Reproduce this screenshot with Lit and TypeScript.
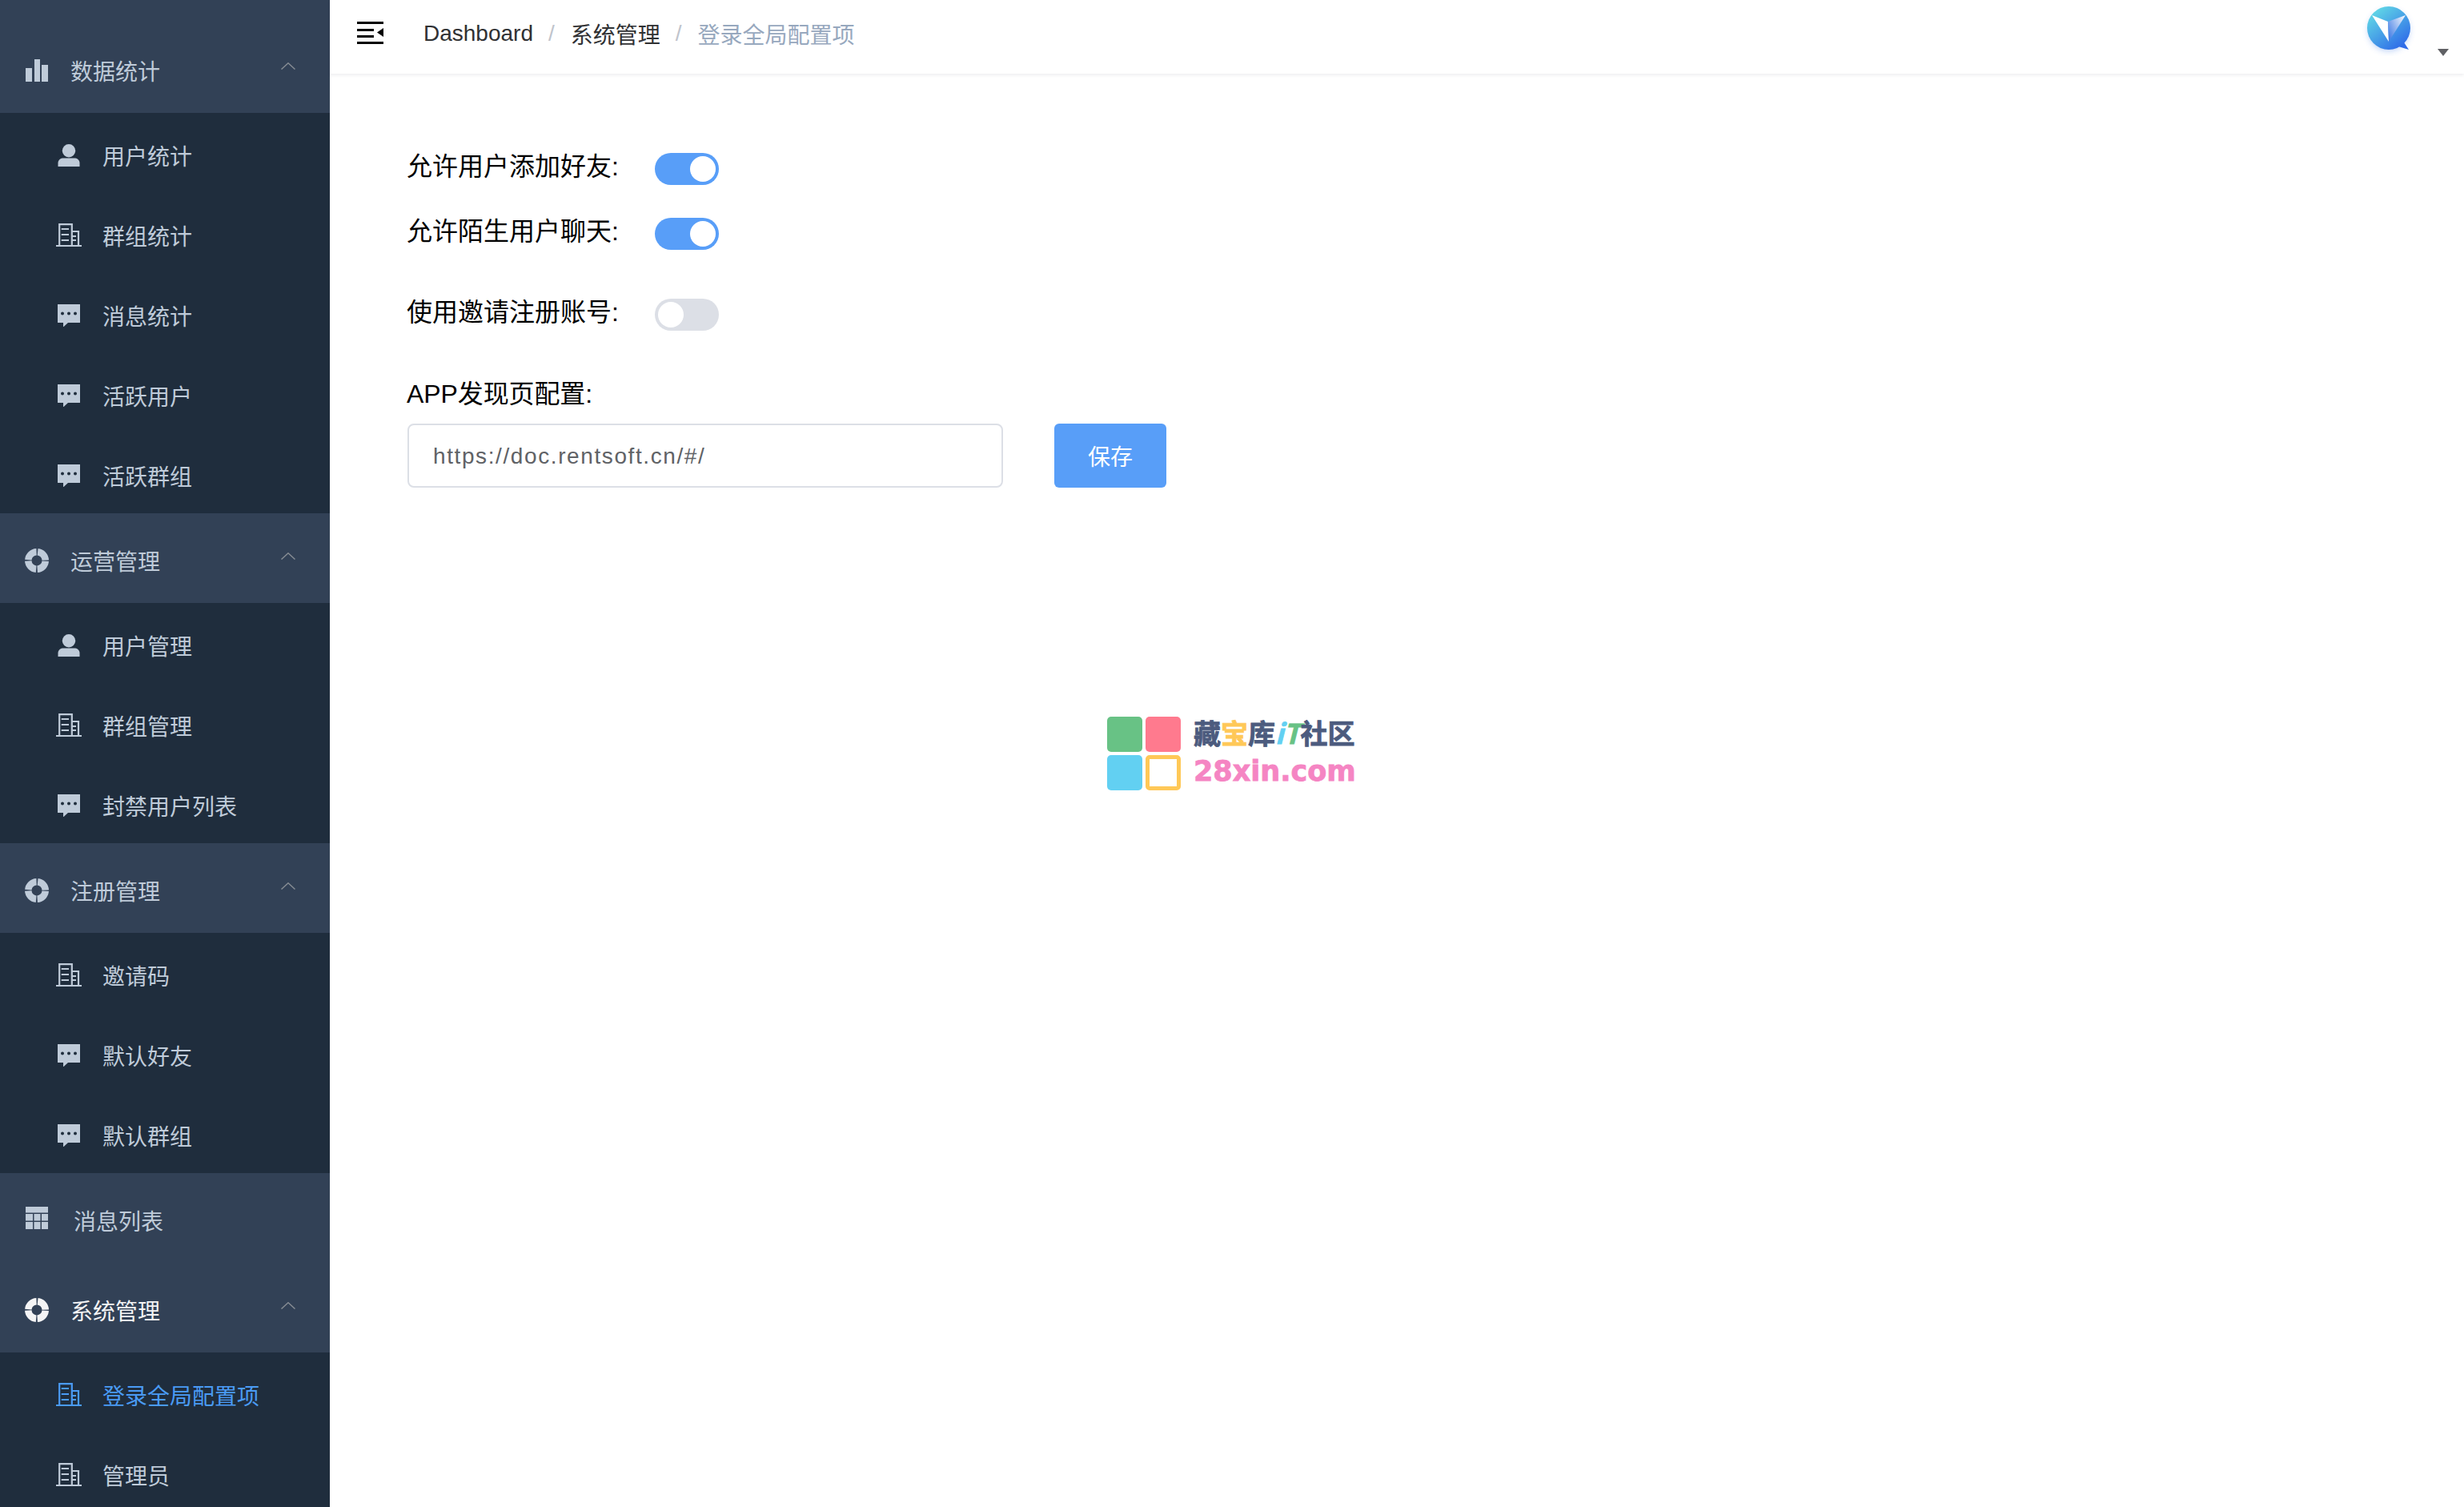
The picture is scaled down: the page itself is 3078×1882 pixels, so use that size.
import { LitElement, html, css, svg } from "lit";
import { customElement } from "lit/decorators.js";

const icons: Record<string, any> = {
  bars: svg`<svg class="ic" viewBox="0 0 28 28"><path d="M0 11h8v17H0zM11 0h7v28h-7zM20 7h8v21h-8z" fill="currentColor"/></svg>`,
  person: svg`<svg class="ic" viewBox="0 0 28 29"><circle cx="14" cy="8.500" r="8.500" fill="currentColor"/><path d="M0 29v-4.500c0-4.500 3.500-6.500 7-6.500h14c3.500 0 7 2 7 6.500V29z" fill="currentColor"/></svg>`,
  building: svg`<svg class="ic wide" viewBox="0 0 32 30" fill="none" stroke="currentColor" stroke-width="2.200"><path d="M0 28h32M4.200 28V1.100h15.600V28M19.800 10h8.200V28M6.700 7h9.300M6.700 14h9.300M6.700 21h9.300M20.700 16h4.300M20.700 21h4.300"/></svg>`,
  chat: svg`<svg class="ic" viewBox="0 0 28 28"><path fill-rule="evenodd" d="M0 0h28v23H13l-6 5.500V23H0zM6 9.500a2 2 0 1 0 0 4 2 2 0 0 0 0-4zm8 0a2 2 0 1 0 0 4 2 2 0 0 0 0-4zm8 0a2 2 0 1 0 0 4 2 2 0 0 0 0-4z" fill="currentColor"/></svg>`,
  buoy: svg`<svg class="ic buoy" viewBox="0 0 30 30"><circle cx="15" cy="15" r="10.750" fill="none" stroke="currentColor" stroke-width="8.500" stroke-dasharray="15.290 1.600" stroke-dashoffset="-0.800"/></svg>`,
  table: svg`<svg class="ic flat" viewBox="0 0 28 28"><path d="M0 0h28v7.500H0zM0 9h9v8.500H0zM10.500 9h8v8.500h-8zM20 9h8v8.500h-8zM0 19h9v9H0zM10.500 19h8v9h-8zM20 19h8v9h-8z" fill="currentColor"/></svg>`,
};

const arrow = svg`<svg class="arrow" viewBox="0 0 18 9" fill="none" stroke="currentColor" stroke-width="1.500"><path d="M0.500 8.500L9 0.800l8.500 7.700"/></svg>`;

type Group = { title: string; icon: string; active?: boolean; first?: boolean; items: [string, string, boolean?][] };

const groups: Group[] = [
  { title: "数据统计", icon: "bars", first: true, items: [["用户统计", "person"], ["群组统计", "building"], ["消息统计", "chat"], ["活跃用户", "chat"], ["活跃群组", "chat"]] },
  { title: "运营管理", icon: "buoy", items: [["用户管理", "person"], ["群组管理", "building"], ["封禁用户列表", "chat"]] },
  { title: "注册管理", icon: "buoy", items: [["邀请码", "building"], ["默认好友", "chat"], ["默认群组", "chat"]] },
  { title: "系统管理", icon: "buoy", active: true, items: [["登录全局配置项", "building", true], ["管理员", "building"]] },
];

@customElement("app-root")
export class AppRoot extends LitElement {
  static styles = css`
    :host {
      display: flex;
      height: 100vh;
      overflow: hidden;
      background: #fff;
      font-family: "Liberation Sans", "Noto Sans CJK SC", sans-serif;
      font-size: 28px;
    }
    .side {
      flex: 0 0 412px;
      height: 100%;
      overflow: hidden;
      background: #1f2d3d;
      color: #bfcbd9;
    }
    .head {
      height: 112px;
      background: #324156;
      display: flex;
      align-items: center;
      padding: 0 43px 0 32px;
    }
    .head.first {
      height: 141px;
      padding-top: 29px;
      box-sizing: border-box;
    }
    .head.on {
      color: #f4f4f5;
    }
    .head .t {
      margin-left: 28px;
      flex: 1;
      position: relative;
      top: 3px;
    }
    .head.plain .t {
      margin-left: 32px;
    }
    .arrow {
      width: 18px;
      height: 9px;
      color: #858b93;
      margin-top: -6px;
    }
    .item {
      height: 100px;
      display: flex;
      align-items: center;
      padding-left: 72px;
    }
    .item .t {
      margin-left: 28px;
      position: relative;
      top: 3px;
    }
    .item.on {
      color: #4a9bf5;
    }
    .ic {
      flex: none;
      width: 28px;
      height: 28px;
      display: block;
      position: relative;
      top: 2.5px;
    }
    .ic.flat {
      top: 0;
    }
    .ic.wide {
      width: 32px;
      height: 30px;
      margin: 0 -2px;
    }
    .ic.buoy {
      width: 30px;
      height: 30px;
      margin: 0 -1px;
    }
    .main {
      flex: 1;
      position: relative;
      min-width: 0;
    }
    .bar {
      height: 92px;
      box-sizing: border-box;
      box-shadow: 0 2px 4px rgba(0, 21, 41, 0.07);
      display: flex;
      align-items: flex-start;
      padding: 8px 19px 0 34px;
    }
    .ham {
      width: 33px;
      height: 28px;
      margin-top: 19px;
      flex: none;
    }
    .crumb {
      display: flex;
      flex: 1;
      margin: 2px 0 0 50px;
      height: 64px;
      align-items: center;
      color: #303133;
    }
    .sep {
      color: #c0c4cc;
      margin: 0 20px 0 19px;
    }
    .cur {
      color: #97a8be;
    }
    .logo {
      width: 70px;
      height: 70px;
      flex: none;
      margin: -8px 0 0 0;
    }
    .caret {
      width: 14px;
      height: 9px;
      margin: 53px 0 0 26px;
      flex: none;
    }
    .form {
      padding: 99px 0 0 96px;
      color: #000;
      font-size: 32px;
    }
    .row {
      display: flex;
      align-items: flex-start;
      height: 40px;
      margin-bottom: 41px;
    }
    .row.tall {
      margin-bottom: 61px;
    }
    .row.last {
      margin-bottom: 59px;
    }
    .lab {
      width: 310px;
      line-height: 34px;
      white-space: nowrap;
    }
    .sw {
      width: 80px;
      height: 40px;
      border-radius: 20px;
      background: #dcdfe6;
      display: flex;
      padding: 4px;
      box-sizing: border-box;
    }
    .sw.on {
      background: #589ef8;
      justify-content: flex-end;
    }
    .sw i {
      width: 32px;
      height: 32px;
      border-radius: 50%;
      background: #fff;
      display: block;
    }
    .app {
      line-height: 40px;
      margin-bottom: 17px;
      letter-spacing: -0.1px;
    }
    .inline {
      display: flex;
      align-items: stretch;
      gap: 64px;
    }
    input {
      width: 744px;
      height: 80px;
      box-sizing: border-box;
      border: 2px solid #dcdfe6;
      border-radius: 8px;
      padding: 2px 30px 0;
      font: inherit;
      font-size: 28px;
      letter-spacing: 1.6px;
      color: #606266;
      outline: none;
      margin-left: 1px;
    }
    .btn {
      width: 140px;
      height: 80px;
      border-radius: 6px;
      background: #589ef8;
      color: #fff;
      font-size: 28px;
      display: flex;
      align-items: center;
      justify-content: center;
    }
    .mark {
      position: absolute;
      left: 971px;
      top: 895px;
      display: flex;
      gap: 16px;
    }
    .tiles {
      display: grid;
      grid-template-columns: 44px 44px;
      grid-template-rows: 44px 44px;
      gap: 4px;
    }
    .tiles b {
      display: block;
      border-radius: 5px;
    }
    .words {
      display: flex;
      flex-direction: column;
      font-weight: 700;
      white-space: nowrap;
    }
    .w1 {
      font-family: "Noto Sans CJK SC", sans-serif;
      font-size: 34px;
      line-height: 40px;
      color: #4c5b7e;
      display: flex;
      -webkit-text-stroke: 0.8px currentColor;
    }
    .w1 .tilt {
      font-style: italic;
    }
    .w2 {
      font-family: "DejaVu Sans", sans-serif;
      font-size: 35px;
      line-height: 40px;
      margin-top: 8px;
      color: #f585c3;
      -webkit-text-stroke: 0.8px currentColor;
    }
  `;

  private group(g: Group) {
    return html`
      <div class="head ${g.first ? "first" : ""} ${g.active ? "on" : ""}">
        ${icons[g.icon]}<span class="t">${g.title}</span>${arrow}
      </div>
      ${g.items.map(
        ([t, ic, on]) => html`<div class="item ${on ? "on" : ""}">${icons[ic]}<span class="t">${t}</span></div>`
      )}
    `;
  }

  private row(label: string, on: boolean, cls = "") {
    return html`<div class="row ${cls}">
      <span class="lab">${label}</span>
      <span class="sw ${on ? "on" : ""}"><i></i></span>
    </div>`;
  }

  render() {
    return html`
      <aside class="side">
        ${this.group(groups[0])} ${this.group(groups[1])} ${this.group(groups[2])}
        <div class="head plain">${icons.table}<span class="t">消息列表</span></div>
        ${this.group(groups[3])}
      </aside>
      <section class="main">
        <header class="bar">
          <svg class="ham" viewBox="0 0 33 28"><path d="M0 0h33v3H0zM0 9h21v3H0zM0 17h21v3H0zM0 25h33v3H0zM33 8v11l-8-5.500z" fill="#000"/></svg>
          <nav class="crumb">
            <span>Dashboard</span><span class="sep">/</span><span>系统管理</span><span class="sep">/</span><span class="cur">登录全局配置项</span>
          </nav>
          <svg class="logo" viewBox="0 0 70 70">
            <defs>
              <linearGradient id="lg" x1="0.15" y1="0.05" x2="0.85" y2="0.95">
                <stop offset="0" stop-color="#62dbe6" />
                <stop offset="1" stop-color="#2d68e8" />
              </linearGradient>
              <linearGradient id="fc" x1="1" y1="0" x2="0" y2="0.7">
                <stop offset="0" stop-color="#ffffff" />
                <stop offset="1" stop-color="#4a82e6" />
              </linearGradient>
              <filter id="bl" x="-30%" y="-30%" width="160%" height="160%"><feGaussianBlur stdDeviation="4" /></filter>
            </defs>
            <circle cx="35" cy="38" r="25" fill="#4f86ea" opacity="0.45" filter="url(#bl)" />
            <path d="M52 50l8 12-13-4z" fill="#2f6ce8" />
            <circle cx="35" cy="35" r="27" fill="url(#lg)" />
            <path d="M14 19l20 8 1 25z" fill="#fff" />
            <path d="M56 19l-22 8 1 25z" fill="url(#fc)" />
          </svg>
          <svg class="caret" viewBox="0 0 14 9"><path d="M0 0h14L7 9z" fill="#5f6064"/></svg>
        </header>
        <div class="form">
          ${this.row("允许用户添加好友:", true)}
          ${this.row("允许陌生用户聊天:", true, "tall")}
          ${this.row("使用邀请注册账号:", false, "last")}
          <div class="app">APP发现页配置:</div>
          <div class="inline">
            <input value="https://doc.rentsoft.cn/#/" />
            <span class="btn">保存</span>
          </div>
        </div>
        <div class="mark">
          <div class="tiles">
            <b style="background:#68c285"></b>
            <b style="background:#ff7a8e"></b>
            <b style="background:#62d0f2"></b>
            <b style="border:5px solid #ffc857"></b>
          </div>
          <div class="words">
            <div class="w1">
              <span>藏</span><span style="color:#ffc857">宝</span><span>库</span><span class="tilt" style="color:#62d0f2">i</span><span class="tilt" style="color:#68c285">T</span><span>社区</span>
            </div>
            <div class="w2">28xin.com</div>
          </div>
        </div>
      </section>
    `;
  }
}
